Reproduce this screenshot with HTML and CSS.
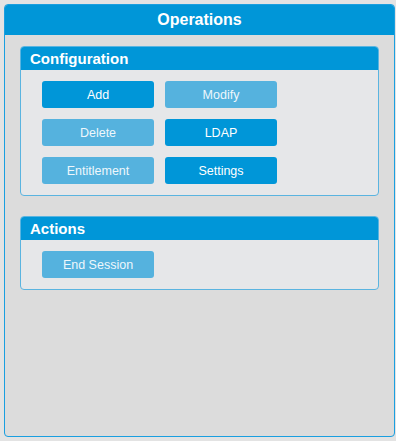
FILE: index.html
```html
<!DOCTYPE html>
<html lang="en">
  <head>
    <meta charset="UTF-8" />
    <meta name="viewport" content="width=device-width, initial-scale=1.0" />
    <title>Operations</title>
    <link rel="stylesheet" href="styles.css">
  </head>
  <body>
    <div class="panel">
      <header class="panel-title">Operations</header>
      <section class="group">
        <h2 class="group-title">Configuration</h2>
        <div class="buttons">
          <button class="btn">Add</button>
          <button class="btn light">Modify</button>
          <button class="btn light">Delete</button>
          <button class="btn">LDAP</button>
          <button class="btn light">Entitlement</button>
          <button class="btn">Settings</button>
        </div>
      </section>
      <section class="group">
        <h2 class="group-title">Actions</h2>
        <div class="buttons">
          <button class="btn light">End Session</button>
        </div>
      </section>
    </div>
  </body>
</html>
```

FILE: styles.css
```css
* {
  padding: 0;
  margin: 0;
  box-sizing: border-box;
}

html,
body {
  height: 100%;
}

body {
  background: #e3e3e3;
  padding: 4px 1px 4px 4px;
  font-family: "Liberation Sans", Arial, sans-serif;
}

.panel {
  height: 100%;
  background: #dcdcdc;
  border: 1px solid #1a9fe0;
  border-radius: 4px;
  overflow: hidden;
}

.panel-title {
  height: 30px;
  background: #0096d8;
  color: #fff;
  font-size: 16px;
  font-weight: bold;
  text-align: center;
  line-height: 30px;
}

.group {
  margin: 11px 15px 20px;
  background: #e6e7e9;
  border: 1px solid #5ab4e0;
  border-radius: 4px;
  overflow: hidden;
}

.group-title {
  height: 23px;
  background: #0096d8;
  color: #fff;
  font-size: 15px;
  font-weight: bold;
  line-height: 23px;
  padding-left: 9px;
}

.buttons {
  display: grid;
  grid-template-columns: 112px 112px;
  gap: 11px;
  padding: 11px 21px;
}

.btn {
  height: 27px;
  border: none;
  border-radius: 3px;
  background: #0096d8;
  color: #fff;
  font-family: "Liberation Sans", Arial, sans-serif;
  font-size: 12.5px;
}

.btn.light {
  background: #55b2de;
  color: #eef7fc;
}
```
